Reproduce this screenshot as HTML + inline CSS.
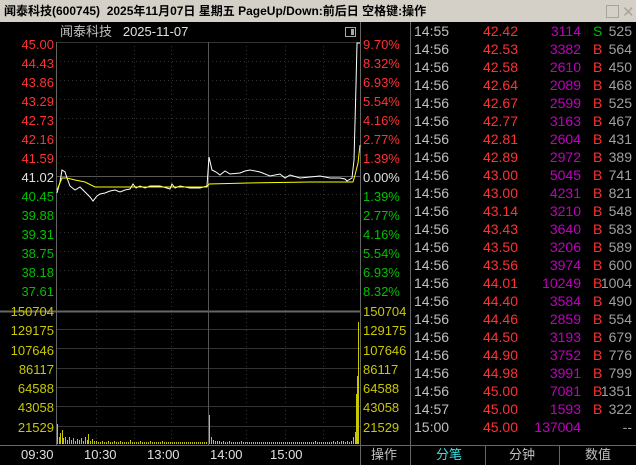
<!DOCTYPE html><html><head><meta charset="utf-8"><style>
body{margin:0;width:636px;height:465px;background:#000;overflow:hidden;font-family:"Liberation Sans","Noto Sans CJK SC",sans-serif;position:relative}
.t{position:absolute;font-size:13px;white-space:nowrap;line-height:14px}
#title{position:absolute;left:0;top:0;width:636px;height:22px;background:#d4d0c8;font-weight:bold;font-size:12px;line-height:22px;color:#000}
.r{color:#ff3232}.g{color:#00c000}.y{color:#c8c800}.w{color:#e0e0e0}
.row{position:absolute;left:414px;width:222px;height:18px;font-size:14px;line-height:18px;font-family:"Liberation Sans",sans-serif}
.row span{position:absolute}
</style></head><body>
<div id="title"><span style="position:absolute;left:4px">闻泰科技(600745)&nbsp; 2025年11月07日 星期五 PageUp/Down:前后日 空格键:操作</span>
<div style="position:absolute;left:606px;top:5px;width:11px;height:11px;border:1px solid #a8a49c"></div>
<div style="position:absolute;left:622px;top:2px;color:#a8a49c;font-weight:normal;font-size:15px">✕</div></div>
<svg width="636" height="465" style="position:absolute;left:0;top:0">
<g stroke="#333" stroke-width="1">
<line x1="56" y1="42.5" x2="360" y2="42.5"/>
<line x1="56" y1="61.5" x2="360" y2="61.5" stroke-dasharray="1 3"/><line x1="56" y1="80.5" x2="360" y2="80.5" stroke-dasharray="1 3"/><line x1="56" y1="99.5" x2="360" y2="99.5" stroke-dasharray="1 3"/><line x1="56" y1="118.5" x2="360" y2="118.5" stroke-dasharray="1 3"/><line x1="56" y1="137.5" x2="360" y2="137.5" stroke-dasharray="1 3"/><line x1="56" y1="156.5" x2="360" y2="156.5" stroke-dasharray="1 3"/>
<line x1="56" y1="194.5" x2="360" y2="194.5" stroke-dasharray="1 3"/><line x1="56" y1="213.5" x2="360" y2="213.5" stroke-dasharray="1 3"/><line x1="56" y1="232.5" x2="360" y2="232.5" stroke-dasharray="1 3"/><line x1="56" y1="251.5" x2="360" y2="251.5" stroke-dasharray="1 3"/><line x1="56" y1="270.5" x2="360" y2="270.5" stroke-dasharray="1 3"/><line x1="56" y1="289.5" x2="360" y2="289.5" stroke-dasharray="1 3"/>
<line x1="56" y1="329.5" x2="360" y2="329.5"/><line x1="56" y1="348.5" x2="360" y2="348.5"/><line x1="56" y1="368.5" x2="360" y2="368.5"/><line x1="56" y1="387.5" x2="360" y2="387.5"/><line x1="56" y1="406.5" x2="360" y2="406.5"/><line x1="56" y1="426.5" x2="360" y2="426.5"/>
<line x1="96.5" y1="42" x2="96.5" y2="446" stroke-dasharray="1 3"/><line x1="134.5" y1="42" x2="134.5" y2="446" stroke-dasharray="1 3"/><line x1="171.5" y1="42" x2="171.5" y2="446" stroke-dasharray="1 3"/>
<line x1="246.5" y1="42" x2="246.5" y2="446" stroke-dasharray="1 3"/><line x1="285.5" y1="42" x2="285.5" y2="446" stroke-dasharray="1 3"/><line x1="323.5" y1="42" x2="323.5" y2="446" stroke-dasharray="1 3"/>
</g>
<line x1="56" y1="176.5" x2="360" y2="176.5" stroke="#555"/>
<line x1="0" y1="311.5" x2="360" y2="311.5" stroke="#666" stroke-width="2"/>
<line x1="208.5" y1="42" x2="208.5" y2="446" stroke="#555"/>
<line x1="56.5" y1="42" x2="56.5" y2="446" stroke="#666"/>
<line x1="360.5" y1="22" x2="360.5" y2="465" stroke="#666"/>
<line x1="410.5" y1="22" x2="410.5" y2="465" stroke="#666"/>
<line x1="0" y1="445.5" x2="636" y2="445.5" stroke="#666"/>
<line x1="485.5" y1="446" x2="485.5" y2="465" stroke="#666"/><line x1="559.5" y1="446" x2="559.5" y2="465" stroke="#666"/>
<polyline fill="none" stroke="#fff" stroke-width="1" points="57,193 60,182 62,170 65,172 67,178 70,186 75,190 80,187 85,192 90,197 93,201 97,196 100,194 105,193 110,191 115,190 120,192 125,190 130,189 133,184 136,188 140,186 145,188 150,186 160,186 170,189 172,184 175,188 180,186 190,188 200,188 207,186 209,157 212,170 216,172 220,175 225,171 230,174 240,173 245,171 250,170 260,172 270,176 280,174 285,178 290,175 300,178 310,177 320,176 330,178 340,178 345,179 347,181 352,178 354,160 356,85 357,43 360,43"/>
<polyline fill="none" stroke="#ffff00" stroke-width="1" points="57,190 62,178 67,178 75,180 85,182 95,187 130,187 170,187 207,187 209,184 248,183 310,182 353,182 355,175 358,163 360,145"/>
<g stroke="#c8c800" stroke-width="1">
<path d="M57.5 444V424M59.5 444V437M60.5 444V433M62.5 444V430M63.5 444V438M65.5 444V437M67.5 444V440M69.5 444V437M71.5 444V440M73.5 444V438M75.5 444V441M77.5 444V439M79.5 444V440M81.5 444V438M83.5 444V441M85.5 444V437M87.5 444V440M88.5 444V434M90.5 444V441M92.5 444V439M94.5 444V441M96.5 444V441M98.5 444V442M100.5 444V442M102.5 444V441M104.5 444V442M106.5 444V442M108.5 444V441M110.5 444V442M112.5 444V442M114.5 444V441M116.5 444V442M118.5 444V442M120.5 444V441M122.5 444V442M124.5 444V442M126.5 444V442M128.5 444V442M130.5 444V440M132.5 444V442M134.5 444V442M136.5 444V442M138.5 444V442M140.5 444V441M142.5 444V442M144.5 444V442M146.5 444V442M148.5 444V442M150.5 444V441M152.5 444V442M154.5 444V442M156.5 444V442M158.5 444V442M160.5 444V442M162.5 444V441M164.5 444V442M166.5 444V442M168.5 444V442M170.5 444V442M172.5 444V442M174.5 444V442M176.5 444V442M178.5 444V442M180.5 444V442M182.5 444V442M184.5 444V442M186.5 444V442M188.5 444V442M190.5 444V442M192.5 444V442M194.5 444V442M196.5 444V442M198.5 444V442M200.5 444V442M202.5 444V442M204.5 444V442M206.5 444V442M209.5 444V415M211.5 444V437M213.5 444V440M215.5 444V441M217.5 444V441M219.5 444V441M221.5 444V442M223.5 444V441M225.5 444V442M227.5 444V442M229.5 444V441M231.5 444V442M233.5 444V442M235.5 444V442M237.5 444V442M239.5 444V442M241.5 444V441M243.5 444V442M245.5 444V442M247.5 444V442M249.5 444V442M251.5 444V442M253.5 444V442M255.5 444V442M257.5 444V442M259.5 444V442M261.5 444V442M263.5 444V442M265.5 444V442M267.5 444V442M269.5 444V442M271.5 444V442M273.5 444V442M275.5 444V442M277.5 444V442M279.5 444V442M281.5 444V442M283.5 444V442M285.5 444V442M287.5 444V442M289.5 444V442M291.5 444V442M293.5 444V442M295.5 444V442M297.5 444V442M299.5 444V442M301.5 444V442M303.5 444V442M305.5 444V442M307.5 444V442M309.5 444V442M311.5 444V442M313.5 444V442M315.5 444V441M317.5 444V442M319.5 444V442M321.5 444V442M323.5 444V442M325.5 444V442M327.5 444V442M329.5 444V442M331.5 444V442M333.5 444V441M335.5 444V442M337.5 444V441M339.5 444V442M341.5 444V441M343.5 444V441M345.5 444V442M347.5 444V441M349.5 444V442M351.5 444V441M353.5 444V437M355.5 444V432M356.5 444V394M357.5 444V376M358.5 444V322"/>
</g></svg>
<div class="t w" style="left:60px;top:25px;font-size:13px;color:#c0c0c0">闻泰科技&nbsp;&nbsp; <span style="color:#e0e0e0">2025-11-07</span></div>
<div style="position:absolute;left:345px;top:27px;width:9px;height:8px;border:1px solid #aaa"><div style="position:absolute;right:1px;top:1px;width:3px;height:6px;background:#aaa"></div></div>
<div style="position:absolute;left:0;top:35px;width:54px;text-align:right;font-size:13px;line-height:19px">
<div class="r">45.00</div><div class="r">44.43</div><div class="r">43.86</div><div class="r">43.29</div><div class="r">42.73</div><div class="r">42.16</div><div class="r">41.59</div><div class="w">41.02</div><div class="g">40.45</div><div class="g">39.88</div><div class="g">39.31</div><div class="g">38.75</div><div class="g">38.18</div><div class="g">37.61</div></div>
<div style="position:absolute;left:363px;top:35px;font-size:13px;line-height:19px">
<div class="r">9.70%</div><div class="r">8.32%</div><div class="r">6.93%</div><div class="r">5.54%</div><div class="r">4.16%</div><div class="r">2.77%</div><div class="r">1.39%</div><div class="w">0.00%</div><div class="g">1.39%</div><div class="g">2.77%</div><div class="g">4.16%</div><div class="g">5.54%</div><div class="g">6.93%</div><div class="g">8.32%</div></div>
<div style="position:absolute;left:0;top:302px;width:54px;text-align:right;font-size:13px;line-height:19.3px" class="y">
<div>150704</div><div>129175</div><div>107646</div><div>86117</div><div>64588</div><div>43058</div><div>21529</div></div>
<div style="position:absolute;left:363px;top:302px;font-size:13px;line-height:19.3px" class="y">
<div>150704</div><div>129175</div><div>107646</div><div>86117</div><div>64588</div><div>43058</div><div>21529</div></div>
<div class="t" style="top:448px;left:21px;color:#e0e0e0">09:30</div>
<div class="t" style="top:448px;left:84px;color:#e0e0e0">10:30</div>
<div class="t" style="top:448px;left:147px;color:#e0e0e0">13:00</div>
<div class="t" style="top:448px;left:210px;color:#e0e0e0">14:00</div>
<div class="t" style="top:448px;left:270px;color:#e0e0e0">15:00</div>
<div class="t" style="top:448px;left:371px;color:#c0c0c0">操作</div>
<div class="t" style="top:448px;left:436px;color:#40e0e0">分笔</div>
<div class="t" style="top:448px;left:509px;color:#c0c0c0">分钟</div>
<div class="t" style="top:448px;left:585px;color:#c0c0c0">数值</div>
<div id="list"></div>
<script>
var d=[["14:55","42.42","3114","S","525"],["14:56","42.53","3382","B","564"],["14:56","42.58","2610","B","450"],["14:56","42.64","2089","B","468"],["14:56","42.67","2599","B","525"],["14:56","42.77","3163","B","467"],["14:56","42.81","2604","B","431"],["14:56","42.89","2972","B","389"],["14:56","43.00","5045","B","741"],["14:56","43.00","4231","B","821"],["14:56","43.14","3210","B","548"],["14:56","43.43","3640","B","583"],["14:56","43.50","3206","B","589"],["14:56","43.56","3974","B","600"],["14:56","44.01","10249","B","1004"],["14:56","44.40","3584","B","490"],["14:56","44.46","2859","B","554"],["14:56","44.50","3193","B","679"],["14:56","44.90","3752","B","776"],["14:56","44.98","3991","B","799"],["14:56","45.00","7081","B","1351"],["14:57","45.00","1593","B","322"],["15:00","45.00","137004","","--"]];
var h="";d.forEach(function(r,i){h+='<div class="row" style="top:'+(22+i*18)+'px"><span style="left:0;color:#c0c0c0">'+r[0]+'</span><span style="right:118px;color:#ff3232">'+r[1]+'</span><span style="right:55px;color:#c000c0">'+r[2]+'</span><span style="left:179px;color:'+(r[3]=="S"?"#00c000":"#ff3232")+'">'+r[3]+'</span><span style="right:4px;color:#a0a0a0">'+r[4]+'</span></div>'});
document.getElementById("list").innerHTML=h;
</script>
</body></html>
